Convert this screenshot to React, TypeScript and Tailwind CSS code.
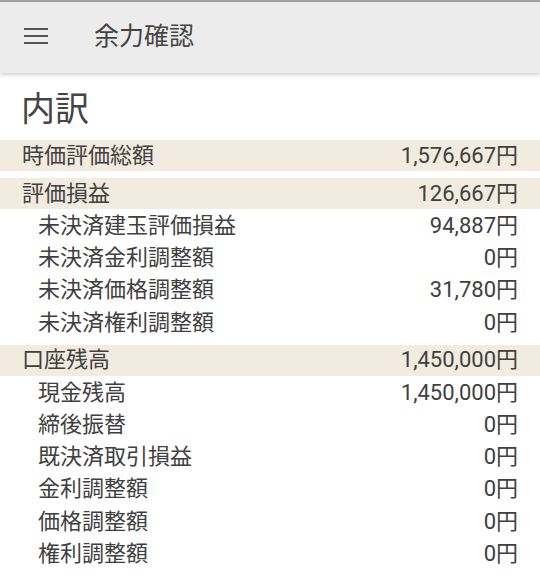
import React from 'react';

const FONT = { fontFamily: "Roboto, 'Noto Sans CJK JP', sans-serif" };

type Row = { label: string; value: string };
type Section = { title: string; total: string; rows: Row[] };

const sections: Section[] = [
  { title: '時価評価総額', total: '1,576,667円', rows: [] },
  {
    title: '評価損益',
    total: '126,667円',
    rows: [
      { label: '未決済建玉評価損益', value: '94,887円' },
      { label: '未決済金利調整額', value: '0円' },
      { label: '未決済価格調整額', value: '31,780円' },
      { label: '未決済権利調整額', value: '0円' },
    ],
  },
  {
    title: '口座残高',
    total: '1,450,000円',
    rows: [
      { label: '現金残高', value: '1,450,000円' },
      { label: '締後振替', value: '0円' },
      { label: '既決済取引損益', value: '0円' },
      { label: '金利調整額', value: '0円' },
      { label: '価格調整額', value: '0円' },
      { label: '権利調整額', value: '0円' },
    ],
  },
];

export default function App() {
  return (
    <div className="w-[540px] h-[584px] overflow-hidden bg-white text-[#404040]" style={FONT}>
      {/* App bar */}
      <div className="border-t-2 border-[#a0a0a0] h-[73px] bg-[#ececec] flex items-center shadow-[0_2px_4px_rgba(0,0,0,0.18)] relative z-10">
        <div className="ml-6 w-6 flex flex-col gap-[5px] -mt-[3px]">
          <span className="block h-[2px] bg-[#555]" />
          <span className="block h-[2px] bg-[#555]" />
          <span className="block h-[2px] bg-[#555]" />
        </div>
        <span className="ml-[46px] text-[25px] leading-none text-[#444] -mt-[2px]">余力確認</span>
      </div>

      <div className="pt-[16px]">
        <h1 className="px-[21px] text-[34px] leading-[40px] h-[48px] text-[#444]">内訳</h1>

        <div className="flex flex-col gap-[7px] mt-[3px]">
          {sections.map((s) => (
            <div key={s.title}>
              <div className="h-[31px] bg-[#f2ebdf] flex items-center justify-between px-[22px] text-[22px] leading-none">
                <span>{s.title}</span>
                <span>{s.total}</span>
              </div>
              {s.rows.map((r) => (
                <div key={r.label} className="h-[32.2px] pt-[2px] flex items-center justify-between pl-[38px] pr-[22px] text-[22px] leading-none">
                  <span>{r.label}</span>
                  <span>{r.value}</span>
                </div>
              ))}
            </div>
          ))}
        </div>
      </div>
    </div>
  );
}
